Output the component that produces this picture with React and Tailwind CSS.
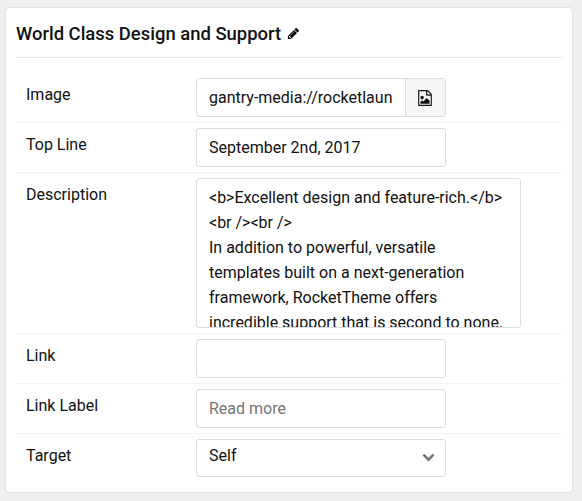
const PencilIcon = () => (
  <svg viewBox="0 0 1792 1792" className="mb-px ml-[6px] h-[13px] w-[13px] fill-black">
    <path d="M491 1536l91-91-235-235-91 91v107h128v128h107zm523-928q0-22-22-22-10 0-17 7l-542 542q-7 7-7 17 0 22 22 22 10 0 17-7l542-542q7-7 7-17zm-54-192l416 416-832 832h-416v-416zm683 96q0 53-37 90l-166 166-416-416 166-165q36-38 90-38 53 0 91 38l235 234q37 39 37 91z" />
  </svg>
);

const ImageFileIcon = () => (
  <svg viewBox="0 0 1792 1792" className="mr-[2px] h-4 w-4 fill-[#111]">
    <path d="M1596 380q28 28 48 76t20 88v1152q0 40-28 68t-68 28h-1344q-40 0-68-28t-28-68v-1600q0-40 28-68t68-28h896q40 0 88 20t76 48zm-444-244v376h376q-10-29-22-41l-313-313q-12-12-41-22zm384 1528v-1024h-416q-40 0-68-28t-28-68v-416h-768v1536h1280zm-128-448v320h-1024v-192l192-192 128 128 384-384zm-832-192q-80 0-136-56t-56-136 56-136 136-56 136 56 56 136-56 136-136 56z" />
  </svg>
);

const ChevronIcon = () => (
  <svg viewBox="0 0 1792 1792" className="mb-1 h-[13px] w-[13px] fill-[#777]">
    <path d="M1683 808l-742 741q-19 19-45 19t-45-19l-742-741q-19-19-19-45.5t19-45.5l166-165q19-19 45-19t45 19l531 531 531-531q19-19 45-19t45 19l166 165q19 19 19 45.5t-19 45.5z" />
  </svg>
);

const field = "rounded-[3px] border border-[#ddd] bg-white px-3";

function Row({ label, last, children }) {
  return (
    <div className={`flex items-start py-[5px] pl-[10px] ${last ? "" : "border-b border-[#f3f3f3]"}`}>
      <div className="w-[170px] shrink-0 pt-1 leading-[25px]">{label}</div>
      {children}
    </div>
  );
}

export default function App() {
  return (
    <div className="h-[501px] w-[582px] overflow-hidden bg-[#efefef] pl-[6px] pt-2 font-['Roboto',sans-serif] text-base text-[#111]">
      <div className="h-[484px] w-[566px] rounded-[3px] bg-white px-[10px] shadow-[0_0_2px_rgba(0,0,0,0.2)]">
        <h4 className="flex h-[50px] items-center border-b border-[#e9e9e9] pt-[2px] text-[18.45px] leading-7 font-medium">
          World Class Design and Support
          <PencilIcon />
        </h4>
        <div className="pt-[15px]">
          <Row label="Image">
            <div className="flex h-[39px] w-[250px] overflow-hidden rounded-[3px] border border-[#ddd]">
              <div className="w-[209px] border-r border-[#ddd] px-3 leading-[37px]">gantry-media://rocketlaun</div>
              <div className="flex flex-1 items-center justify-center bg-[#f6f6f6]">
                <ImageFileIcon />
              </div>
            </div>
          </Row>
          <Row label="Top Line">
            <div className={`${field} h-[39px] w-[250px] leading-[37px]`}>September 2nd, 2017</div>
          </Row>
          <Row label="Description">
            <div className={`${field} h-[150px] w-[325px] overflow-hidden whitespace-nowrap pt-[6px] leading-[25px]`}>
              &lt;b&gt;Excellent design and feature-rich.&lt;/b&gt;
              <br />
              &lt;br /&gt;&lt;br /&gt;
              <br />
              In addition to powerful, versatile
              <br />
              templates built on a next-generation
              <br />
              framework, RocketTheme offers
              <br />
              incredible support that is second to none.
            </div>
          </Row>
          <Row label="Link">
            <div className={`${field} h-[39px] w-[250px]`} />
          </Row>
          <Row label="Link Label">
            <div className={`${field} h-[39px] w-[250px] leading-[37px] text-[#757575]`}>Read more</div>
          </Row>
          <Row label="Target" last>
            <div className={`${field} flex h-[38px] w-[250px] items-center justify-between pr-[10px]`}>
              <span className="pb-1">Self</span>
              <ChevronIcon />
            </div>
          </Row>
        </div>
      </div>
    </div>
  );
}
